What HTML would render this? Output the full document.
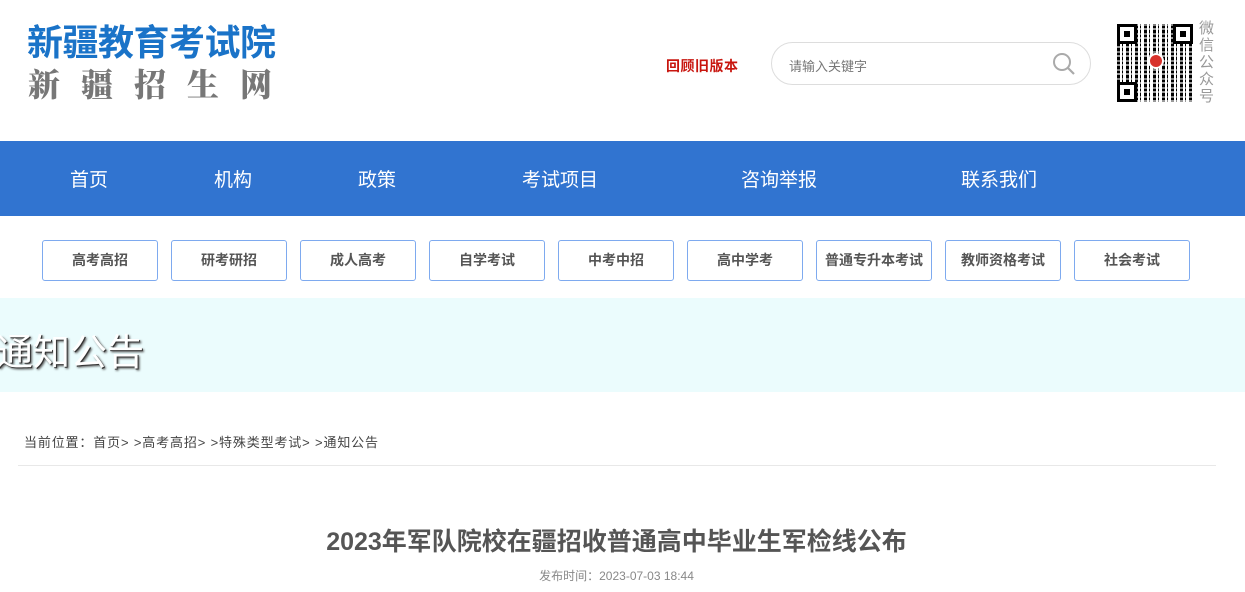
<!DOCTYPE html>
<html><head><meta charset="utf-8"><style>
*{margin:0;padding:0;box-sizing:border-box}
body{width:1245px;height:592px;overflow:hidden;background:#fff;font-family:"Liberation Sans","Noto Sans CJK SC",sans-serif;position:relative}
.a{position:absolute}
.logo1{left:27px;top:21px;font-size:36px;color:#1a73c8;font-weight:bold;letter-spacing:-0.5px;line-height:44px;white-space:nowrap}
.logo2{left:28px;top:63px;font-size:32px;color:#777;font-family:"Noto Serif CJK SC",serif;font-weight:900;letter-spacing:21px;line-height:40px;white-space:nowrap}
.old{left:666px;top:56px;font-size:14px;color:#c8160f;font-weight:bold;letter-spacing:0.5px}
.search{left:771px;top:42px;width:320px;height:43px;border:1px solid #ddd;border-radius:22px}
.search span{position:absolute;left:17px;top:13px;font-size:13px;color:#777}
.qr{left:1117px;top:24px;width:76px;height:78px;background:
repeating-linear-gradient(90deg,#000 0 3px,#fff 3px 5px,#000 5px 6px,#fff 6px 9px),#fff;}
.qr2{left:1117px;top:24px;width:76px;height:78px;background:repeating-linear-gradient(0deg,rgba(255,255,255,.6) 0 2px,transparent 2px 4px,rgba(255,255,255,.5) 4px 6px,transparent 6px 9px)}
.fp{width:20px;height:20px;border:3px solid #000;background:#fff}
.fp i{position:absolute;left:4px;top:4px;width:6px;height:6px;background:#000}
.wx{left:1199px;top:20px;width:16px;font-size:15px;line-height:17px;color:#999}
.nav{left:0;top:141px;width:1245px;height:75px;background:#3174d0}
.nav span{position:absolute;top:24px;font-size:19px;color:#fff}
.btn{top:240px;width:116px;height:41px;border:1px solid #7eaaef;border-radius:3px;text-align:center;line-height:39px;font-size:14px;color:#555;font-weight:bold}
.banner{left:0;top:298px;width:1245px;height:94px;background:#ebfcfd}
.banner span{position:absolute;left:-4px;top:24px;font-size:37px;color:#fff;text-shadow:1px 1px 0 #333,2px 2px 2px #555}
.crumb{left:24px;top:432px;font-size:13px;color:#444;letter-spacing:0.85px;white-space:nowrap}
.line{left:18px;top:465px;width:1198px;height:1px;background:#e8e8e8}
.title{left:0;width:1233px;top:522px;text-align:center;font-size:25px;font-weight:bold;color:#555}
.date{left:0;width:1233px;top:567px;text-align:center;font-size:12px;color:#888}
</style></head><body>
<div class="a logo1">新疆教育考试院</div>
<div class="a logo2">新疆招生网</div>
<div class="a old">回顾旧版本</div>
<div class="a search"><span>请输入关键字</span>
<svg class="a" style="left:279px;top:8px" width="26" height="26" viewBox="0 0 26 26"><circle cx="11" cy="11" r="8" fill="none" stroke="#aaa" stroke-width="2"/><line x1="17" y1="17" x2="23" y2="23" stroke="#aaa" stroke-width="2.2"/></svg></div>
<div class="a qr"></div><div class="a qr2"></div>
<div class="a fp" style="left:1117px;top:24px"><i></i></div>
<div class="a fp" style="left:1173px;top:24px"><i></i></div>
<div class="a fp" style="left:1117px;top:82px"><i></i></div>
<div class="a" style="left:1148px;top:53px;width:16px;height:16px;border-radius:50%;background:#d8322c;border:2px solid #fff"></div>
<div class="a wx">微信公众号</div>
<div class="a nav"><span style="left:70px">首页</span><span style="left:214px">机构</span><span style="left:358px">政策</span><span style="left:522px">考试项目</span><span style="left:741px">咨询举报</span><span style="left:961px">联系我们</span></div>
<div class="a btn" style="left:42px">高考高招</div>
<div class="a btn" style="left:171px">研考研招</div>
<div class="a btn" style="left:300px">成人高考</div>
<div class="a btn" style="left:429px">自学考试</div>
<div class="a btn" style="left:558px">中考中招</div>
<div class="a btn" style="left:687px">高中学考</div>
<div class="a btn" style="left:816px">普通专升本考试</div>
<div class="a btn" style="left:945px">教师资格考试</div>
<div class="a btn" style="left:1074px">社会考试</div>
<div class="a banner"><span>通知公告</span></div>
<div class="a crumb">当前位置：首页&gt; &gt;高考高招&gt; &gt;特殊类型考试&gt; &gt;通知公告</div>
<div class="a line"></div>
<div class="a title">2023年军队院校在疆招收普通高中毕业生军检线公布</div>
<div class="a date">发布时间：2023-07-03 18:44</div>
</body></html>
